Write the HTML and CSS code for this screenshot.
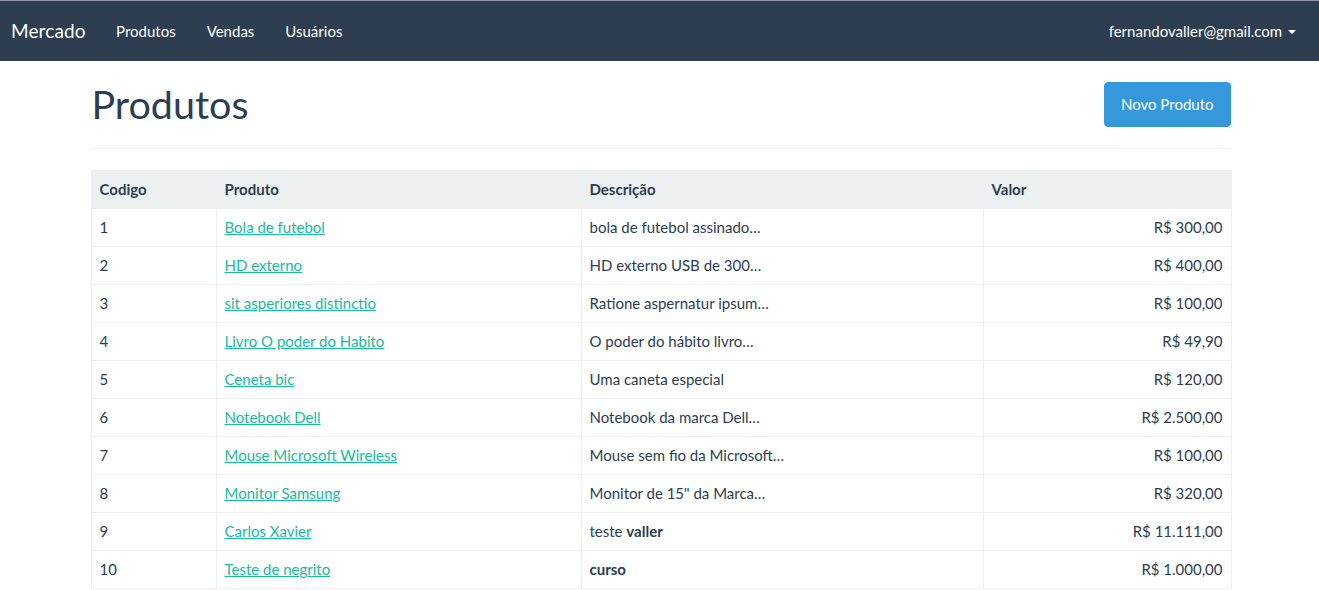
FILE: index.html
```html
<!DOCTYPE html>
<html lang="pt-BR">
<head>
<meta charset="utf-8">
<title>Mercado - Produtos</title>
<link rel="stylesheet" href="styles.css">
</head>
<body>
<nav class="navbar">
  <div class="nav-left">
    <a class="brand" href="#">Mercado</a>
    <a class="nav-link" href="#">Produtos</a>
    <a class="nav-link" href="#">Vendas</a>
    <a class="nav-link" href="#">Usuários</a>
  </div>
  <div class="nav-right">
    <a class="nav-link user" href="#">fernandovaller@gmail.com <span class="caret"></span></a>
  </div>
</nav>
<main class="container">
  <div class="page-header">
    <h1>Produtos</h1>
    <a class="btn" href="#">Novo Produto</a>
  </div>
  <table class="table">
    <colgroup>
      <col class="c1"><col class="c2"><col class="c3"><col class="c4">
    </colgroup>
    <thead>
      <tr><th>Codigo</th><th>Produto</th><th>Descrição</th><th>Valor</th></tr>
    </thead>
    <tbody>
      <tr><td>1</td><td><a href="#">Bola de futebol</a></td><td>bola de futebol assinado…</td><td class="num">R$ 300,00</td></tr>
      <tr><td>2</td><td><a href="#">HD externo</a></td><td>HD externo USB de 300…</td><td class="num">R$ 400,00</td></tr>
      <tr><td>3</td><td><a href="#">sit asperiores distinctio</a></td><td>Ratione aspernatur ipsum…</td><td class="num">R$ 100,00</td></tr>
      <tr><td>4</td><td><a href="#">Livro O poder do Habito</a></td><td>O poder do hábito livro…</td><td class="num">R$ 49,90</td></tr>
      <tr><td>5</td><td><a href="#">Ceneta bic</a></td><td>Uma caneta especial</td><td class="num">R$ 120,00</td></tr>
      <tr><td>6</td><td><a href="#">Notebook Dell</a></td><td>Notebook da marca Dell…</td><td class="num">R$ 2.500,00</td></tr>
      <tr><td>7</td><td><a href="#">Mouse Microsoft Wireless</a></td><td>Mouse sem fio da Microsoft…</td><td class="num">R$ 100,00</td></tr>
      <tr><td>8</td><td><a href="#">Monitor Samsung</a></td><td>Monitor de 15" da Marca…</td><td class="num">R$ 320,00</td></tr>
      <tr><td>9</td><td><a href="#">Carlos Xavier</a></td><td>teste <strong>valler</strong></td><td class="num">R$ 11.111,00</td></tr>
      <tr><td>10</td><td><a href="#">Teste de negrito</a></td><td><strong>curso</strong></td><td class="num">R$ 1.000,00</td></tr>
    </tbody>
  </table>
</main>
</body>
</html>
```

FILE: styles.css
```css
* { box-sizing: border-box; }

html, body {
  margin: 0;
  padding: 0;
}

body {
  font-family: Lato, "Open Sans", "Liberation Sans", sans-serif;
  font-size: 15px;
  line-height: 1.42857;
  color: #2c3e50;
  background: #fff;
}

.navbar {
  height: 61px;
  background: #2c3e50;
  border-top: 1px solid #8d99a6;
  display: flex;
  justify-content: space-between;
  align-items: center;
  padding: 0 8px 0 0;
}

.nav-left, .nav-right {
  display: flex;
  align-items: center;
}

.brand {
  color: #fff;
  font-size: 19px;
  text-decoration: none;
  padding: 0 15px 0 11px;
  line-height: 60px;
  letter-spacing: 0.1px;
}

.nav-link {
  color: #fff;
  text-decoration: none;
  font-size: 15px;
  padding: 0 15px;
  line-height: 60px;
}

.nav-left .nav-link {
  padding: 0 15.5px;
}

.user {
  padding-right: 15px;
}

.caret {
  display: inline-block;
  width: 0;
  height: 0;
  margin-left: 2px;
  vertical-align: middle;
  border-top: 4px solid #fff;
  border-left: 4px solid transparent;
  border-right: 4px solid transparent;
  position: relative;
  top: -1px;
}

.container {
  width: 1140px;
  margin: 0 auto;
  position: relative;
  left: 1px;
}

.page-header {
  display: flex;
  justify-content: space-between;
  align-items: flex-start;
  margin: 21px 0 21px;
  padding-bottom: 21px;
  border-bottom: 1px solid #ecf0f1;
}

.page-header h1 {
  margin: 0;
  font-size: 39.5px;
  font-weight: 400;
  line-height: 44px;
  color: #2c3e50;
  position: relative;
  left: 1px;
}

.btn {
  display: inline-block;
  background: #3498db;
  color: #fff;
  text-decoration: none;
  font-size: 15px;
  line-height: 21px;
  padding: 11px 16px;
  border-radius: 4px;
  border: 1px solid #3498db;
}

.table {
  width: 1140px;
  border-collapse: collapse;
  table-layout: fixed;
}

.c1 { width: 125px; }
.c2 { width: 365px; }
.c3 { width: 402px; }
.c4 { width: 248px; }

.table th,
.table td {
  padding: 8px 8px;
  line-height: 21px;
  border: 1px solid #ecf0f1;
  text-align: left;
  vertical-align: top;
  white-space: nowrap;
}

.table th {
  background: #ecf0f1;
  font-weight: 700;
}

.table td.num {
  text-align: right;
}

.table a {
  color: #18bc9c;
  text-decoration: underline;
}

strong { font-weight: 700; }
```
